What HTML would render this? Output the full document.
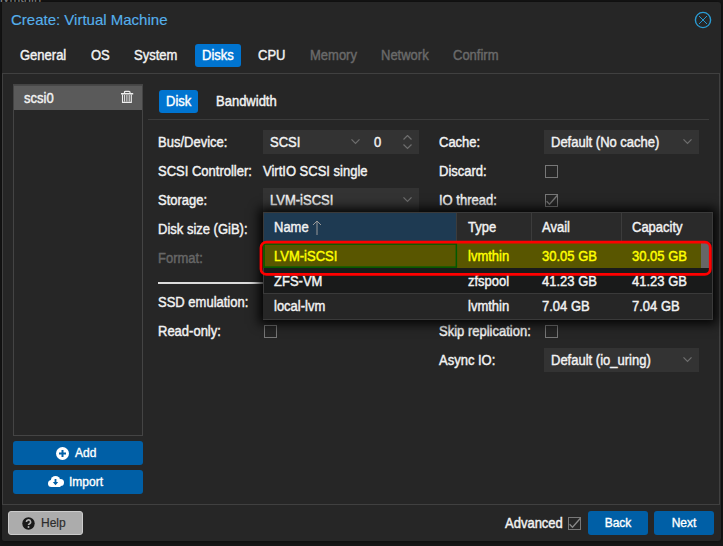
<!DOCTYPE html>
<html><head><meta charset="utf-8">
<style>
*{box-sizing:border-box;margin:0;padding:0}
html,body{width:723px;height:546px;overflow:hidden;background:#161616;font-family:"Liberation Sans",sans-serif;font-size:13px;color:#f2f2f2}
.a{position:absolute}
.t{position:absolute;white-space:nowrap;line-height:24px;height:24px;-webkit-text-stroke:0.4px;transform:scaleY(1.06);transform-origin:0 7px}
#win{position:absolute;left:2px;top:2px;width:719px;height:539px;background:#262626;border-radius:0 3px 3px 2px;box-shadow:0 0 4px rgba(0,0,0,.6)}
.title{left:11px;top:10px;font-size:15px;color:#55b0ec;line-height:20px;transform:none;-webkit-text-stroke:0.15px}
.tab{top:44px;height:23px;line-height:23px;padding:0 7px;border-radius:3px}
.tab{transform:none}
.tab span{display:inline-block;transform:translateY(-1px) scaleY(1.06);transform-origin:0 7px}
.tab.on{background:#0074d0;color:#fff}
.tab.dis{color:#6a6a6a}
.panel{left:2px;top:73px;width:718px;height:432px;border:1px solid #404040}
.fld{background:#333;height:24px}
.cb{width:13px;height:13px;border:1px solid #777}
.lbl.dis{color:#666}
.btn{background:#005fa6;color:#fff;border-radius:3px;text-align:center}
.f12{font-size:12px;transform:none;-webkit-text-stroke:0.35px}
</style></head><body>
<div class="a" style="left:0;top:-14px;line-height:24px;color:#9a9a9a;font-size:13px">lvmthin</div>
<div id="win"></div>
<div class="t title">Create: Virtual Machine</div>
<svg class="a" style="left:694px;top:11px" width="18" height="18" viewBox="0 0 18 18"><circle cx="9" cy="9" r="7.6" fill="none" stroke="#2a9bd3" stroke-width="1.4"/><path d="M5 5L13 13M13 5L5 13" stroke="#2596d0" stroke-width="1"/></svg>

<div class="t tab" style="left:13px"><span>General</span></div>
<div class="t tab" style="left:84px"><span>OS</span></div>
<div class="t tab" style="left:127px"><span>System</span></div>
<div class="t tab on" style="left:195px;width:46px"><span>Disks</span></div>
<div class="t tab" style="left:251px"><span>CPU</span></div>
<div class="t tab dis" style="left:303px"><span>Memory</span></div>
<div class="t tab dis" style="left:374px"><span>Network</span></div>
<div class="t tab dis" style="left:446px"><span>Confirm</span></div>

<div class="a panel"></div>

<!-- left list -->
<div class="a" style="left:13px;top:84px;width:130px;height:352px;border:1px solid #444;background:#262626"></div>
<div class="a" style="left:14px;top:85px;width:128px;height:25px;background:#5a5a5a;border-top:1px solid #484848"></div>
<div class="t" style="left:24px;top:86px;line-height:24px">scsi0</div>
<svg class="a" style="left:121px;top:90px" width="13" height="14" viewBox="0 0 13 14"><path d="M3.5 3V2.2Q3.5 1.3 4.5 1.3H8Q9 1.3 9 2.2V3" stroke="#eee" stroke-width="1.2" fill="none"/><rect x="0" y="3" width="12.2" height="1.5" fill="#eee"/><path d="M1.5 4.5V12.4H10.3V4.5" stroke="#eee" stroke-width="1.1" fill="none"/><path d="M3.6 5v6.6M5.9 5v6.6M8.2 5v6.6" stroke="#e6e6e6" stroke-width="1"/></svg>

<div class="a btn" style="left:13px;top:441px;width:130px;height:24px"></div>
<svg class="a" style="left:56px;top:447px" width="13" height="13" viewBox="0 0 13 13"><circle cx="6.5" cy="6.5" r="6.5" fill="#fff"/><path d="M6.5 3v7M3 6.5h7" stroke="#005fa6" stroke-width="2"/></svg>
<div class="t f12" style="left:75px;top:441px;color:#fff">Add</div>
<div class="a btn" style="left:13px;top:470px;width:130px;height:24px"></div>
<svg class="a" style="left:48px;top:475px" width="16" height="13" viewBox="0 0 16 13"><circle cx="3.5" cy="8.5" r="3.5" fill="#fff"/><circle cx="7.5" cy="5.6" r="4.7" fill="#fff"/><circle cx="12.5" cy="7.4" r="3.5" fill="#fff"/><rect x="3.5" y="8" width="9" height="4" fill="#fff"/><rect x="6.6" y="4" width="1.8" height="4.5" fill="#005fa6"/><path d="M4.8 7H10.2L7.5 10.2z" fill="#005fa6"/></svg>
<div class="t f12" style="left:69px;top:470px;color:#fff">Import</div>

<!-- sub tabs -->
<div class="t tab on" style="left:159px;top:90px;width:39px"><span>Disk</span></div>
<div class="t" style="left:216px;top:89px">Bandwidth</div>
<div class="a" style="left:148px;top:119px;width:561px;height:1px;background:#3c3c3c"></div>

<!-- left column -->
<div class="t" style="left:158px;top:130px">Bus/Device:</div>
<div class="a fld" style="left:263px;top:130px;width:156px"></div>
<div class="t" style="left:270px;top:130px">SCSI</div>
<svg class="a" style="left:351px;top:139px" width="9" height="6" viewBox="0 0 9 6"><path d="M.5 .4L4.5 4.4 8.5 .4" stroke="#6e6e6e" stroke-width="1.2" fill="none"/></svg>
<div class="t" style="left:374px;top:130px">0</div>
<svg class="a" style="left:403px;top:135px" width="9" height="15" viewBox="0 0 9 15"><path d="M.5 4.5L4.5 .5 8.5 4.5M.5 9.5L4.5 13.5 8.5 9.5" stroke="#6e6e6e" stroke-width="1.2" fill="none"/></svg>

<div class="t" style="left:158px;top:159px">SCSI Controller:</div>
<div class="t" style="left:263px;top:159px">VirtIO SCSI single</div>

<div class="t" style="left:158px;top:188px">Storage:</div>
<div class="a fld" style="left:263px;top:188px;width:156px"></div>
<div class="t" style="left:270px;top:188px">LVM-iSCSI</div>
<svg class="a" style="left:403px;top:197px" width="9" height="6" viewBox="0 0 9 6"><path d="M.5 .4L4.5 4.4 8.5 .4" stroke="#6e6e6e" stroke-width="1.2" fill="none"/></svg>

<div class="t" style="left:158px;top:217px">Disk size (GiB):</div>
<div class="t lbl dis" style="left:158px;top:246px">Format:</div>
<div class="a" style="left:158px;top:282px;width:541px;height:2px;background:#dcdcdc"></div>
<div class="t" style="left:158px;top:290px">SSD emulation:</div>
<div class="t" style="left:158px;top:319px">Read-only:</div>
<div class="a cb" style="left:264px;top:325px"></div>

<!-- right column -->
<div class="t" style="left:439px;top:130px">Cache:</div>
<div class="a fld" style="left:544px;top:130px;width:155px"></div>
<div class="t" style="left:551px;top:130px">Default (No cache)</div>
<svg class="a" style="left:683px;top:139px" width="9" height="6" viewBox="0 0 9 6"><path d="M.5 .4L4.5 4.4 8.5 .4" stroke="#6e6e6e" stroke-width="1.2" fill="none"/></svg>
<div class="t" style="left:439px;top:159px">Discard:</div>
<div class="a cb" style="left:545px;top:165px"></div>
<div class="t" style="left:439px;top:188px">IO thread:</div>
<div class="a cb" style="left:545px;top:194px"></div>
<svg class="a" style="left:545px;top:194px" width="13" height="13" viewBox="0 0 13 13"><path d="M1.6 7.2L4.5 10.3 12.2 1.5" stroke="#777" stroke-width="1.3" fill="none"/></svg>

<div class="t" style="left:439px;top:319px">Skip replication:</div>
<div class="a cb" style="left:545px;top:325px"></div>
<div class="t" style="left:439px;top:348px">Async IO:</div>
<div class="a fld" style="left:544px;top:348px;width:155px"></div>
<div class="t" style="left:551px;top:348px">Default (io_uring)</div>
<svg class="a" style="left:683px;top:357px" width="9" height="6" viewBox="0 0 9 6"><path d="M.5 .4L4.5 4.4 8.5 .4" stroke="#6e6e6e" stroke-width="1.2" fill="none"/></svg>

<!-- dropdown grid -->
<div class="a" style="left:263px;top:212px;width:450px;height:108px;background:#1e1e1e;border:1px solid #3a3a3a;box-shadow:0 0 10px 4px rgba(0,0,0,.9)"></div>
<div class="a" style="left:264px;top:213px;width:192px;height:29px;background:#1e3a52"></div>
<div class="a" style="left:457px;top:213px;width:255px;height:29px;background:#2a2a2a"></div>
<div class="a" style="left:456px;top:213px;width:1px;height:28px;background:#3c3c3c"></div>
<div class="a" style="left:531px;top:213px;width:1px;height:28px;background:#3c3c3c"></div>
<div class="a" style="left:621px;top:213px;width:1px;height:28px;background:#3c3c3c"></div>
<div class="t" style="left:274px;top:215px">Name</div>
<svg class="a" style="left:312px;top:220px" width="10" height="15" viewBox="0 0 10 15"><path d="M5 1v14M1 5L5 1 9 5" stroke="#999" stroke-width="1" fill="none"/></svg>
<div class="t" style="left:468px;top:215px">Type</div>
<div class="t" style="left:542px;top:215px">Avail</div>
<div class="t" style="left:632px;top:215px">Capacity</div>

<div class="a" style="left:263px;top:243px;width:438px;height:25px;background:#595600"></div>
<svg class="a" style="left:0;top:0" width="723" height="546"><rect x="264.05" y="244.05" width="192.3" height="23.1" fill="none" stroke="#005a00" stroke-width="1.5"/></svg>
<div class="a" style="left:701px;top:243px;width:8px;height:25px;background:#666"></div>
<div class="t" style="left:274px;top:244px;color:#ffff00">LVM-iSCSI</div>
<div class="t" style="left:468px;top:244px;color:#ffff00">lvmthin</div>
<div class="t" style="left:542px;top:244px;color:#ffff00">30.05 GB</div>
<div class="t" style="left:632px;top:244px;color:#ffff00">30.05 GB</div>

<div class="a" style="left:264px;top:268px;width:448px;height:25px;background:#191a1a"></div>
<div class="t" style="left:274px;top:269px">ZFS-VM</div>
<div class="t" style="left:468px;top:269px">zfspool</div>
<div class="t" style="left:542px;top:269px">41.23 GB</div>
<div class="t" style="left:632px;top:269px">41.23 GB</div>
<div class="a" style="left:263px;top:293px;width:449px;height:1px;background:#3a3a3a"></div>
<div class="a" style="left:263px;top:294px;width:449px;height:25px;background:#262626"></div>
<div class="t" style="left:274px;top:294px">local-lvm</div>
<div class="t" style="left:468px;top:294px">lvmthin</div>
<div class="t" style="left:542px;top:294px">7.04 GB</div>
<div class="t" style="left:632px;top:294px">7.04 GB</div>

<!-- red annotation -->
<svg class="a" style="left:0;top:0" width="723" height="546"><rect x="261" y="242.2" width="449.3" height="32.2" rx="5.5" fill="none" stroke="#ff0000" stroke-width="2.8"/></svg>

<!-- footer -->
<div class="a" style="left:8px;top:511px;width:75px;height:24px;background:#acacac;border:1px solid #cbcbcb;border-radius:3px"></div>
<svg class="a" style="left:22px;top:517px" width="13" height="13" viewBox="0 0 13 13"><circle cx="6.5" cy="6.5" r="6.2" fill="#1a1a1a"/><path d="M4.4 5a2.1 2.1 0 1 1 2.9 1.9c-.6.3-.8.6-.8 1.2" stroke="#b0b0b0" stroke-width="1.6" fill="none"/><circle cx="6.5" cy="10" r="1" fill="#b0b0b0"/></svg>
<div class="t f12" style="left:41px;top:511px;color:#2c2c2c;-webkit-text-stroke:0.2px">Help</div>

<div class="t" style="left:505px;top:511px">Advanced</div>
<div class="a cb" style="left:568px;top:517px"></div>
<svg class="a" style="left:568px;top:517px" width="13" height="13" viewBox="0 0 13 13"><path d="M1.6 7.2L4.5 10.3 12.2 1.5" stroke="#888" stroke-width="1.3" fill="none"/></svg>
<div class="t btn f12" style="left:588px;top:511px;width:60px">Back</div>
<div class="t btn f12" style="left:654px;top:511px;width:60px">Next</div>
</body></html>
